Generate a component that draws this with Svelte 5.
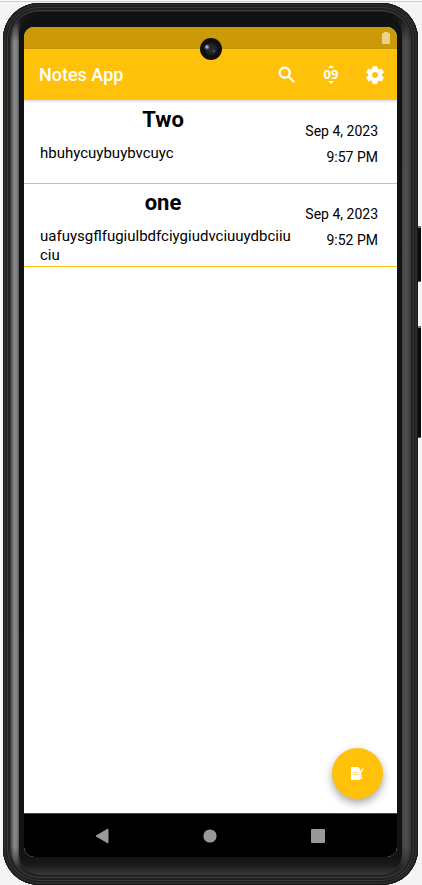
<script>
  const notes = [
    { title: 'Two', body: 'hbuhycuybuybvcuyc', date: 'Sep 4, 2023', time: '9:57 PM' },
    { title: 'one', body: 'uafuysgflfugiulbdfciygiudvciuuydbciiuciu', date: 'Sep 4, 2023', time: '9:52 PM' }
  ];
</script>

<div class="page">
  <div class="phone">
    <span class="key power"></span>
    <span class="key volume"></span>
    <div class="rail">
      <div class="bezel">
        <div class="screen">
          <div class="status">
            <svg width="8" height="13" viewBox="0 0 8 13" aria-hidden="true">
              <path d="M2 0h4v1h1q1 0 1 1v9q0 1-1 1H1q-1 0-1-1V2q0-1 1-1h1z" fill="#e9d28c" />
            </svg>
          </div>
          <span class="camera"></span>
          <header>
            <h1>Notes App</h1>
            <button aria-label="Search">
              <svg width="22" height="22" viewBox="0 0 24 24">
                <path fill="#fff" stroke="#fff" stroke-width=".5" d="M15.5 14h-.79l-.28-.27A6.47 6.47 0 0 0 16 9.5 6.5 6.5 0 1 0 9.5 16c1.61 0 3.09-.59 4.23-1.57l.27.28v.79l5 4.99L20.49 19l-4.99-5zm-6 0C7.01 14 5 11.99 5 9.5S7.01 5 9.5 5 14 7.01 14 9.5 11.99 14 9.5 14z" />
              </svg>
            </button>
            <button class="sort" aria-label="Sort">
              <svg width="6" height="3" viewBox="0 0 6 3"><path d="M0 3 3 0 6 3z" fill="#fff" /></svg>
              <span>09</span>
              <svg width="6" height="3" viewBox="0 0 6 3"><path d="M0 0 3 3 6 0z" fill="#fff" /></svg>
            </button>
            <button aria-label="Settings">
              <svg width="22" height="22" viewBox="0 0 24 24">
                <path fill="#fff" stroke="#fff" stroke-width=".6" d="M19.14 12.94c.04-.3.06-.61.06-.94 0-.32-.02-.64-.07-.94l2.03-1.58c.18-.14.23-.41.12-.61l-1.92-3.32c-.12-.22-.37-.29-.59-.22l-2.39.96c-.5-.38-1.03-.7-1.62-.94l-.36-2.54c-.04-.24-.24-.41-.48-.41h-3.84c-.24 0-.43.17-.47.41l-.36 2.54c-.59.24-1.13.57-1.62.94l-2.39-.96c-.22-.08-.47 0-.59.22L2.74 8.87c-.12.21-.08.47.12.61l2.03 1.58c-.05.3-.09.63-.09.94s.02.64.07.94l-2.03 1.58c-.18.14-.23.41-.12.61l1.92 3.32c.12.22.37.29.59.22l2.39-.96c.5.38 1.03.7 1.62.94l.36 2.54c.05.24.24.41.48.41h3.84c.24 0 .44-.17.47-.41l.36-2.54c.59-.24 1.13-.56 1.62-.94l2.39.96c.22.08.47 0 .59-.22l1.92-3.32c.12-.22.07-.47-.12-.61l-2.01-1.58zM12 15.6c-1.98 0-3.6-1.62-3.6-3.6s1.62-3.6 3.6-3.6 3.6 1.62 3.6 3.6-1.62 3.6-3.6 3.6z" />
              </svg>
            </button>
          </header>
          <main>
            <ul>
              {#each notes as note}
                <li>
                  <div class="text">
                    <h2>{note.title}</h2>
                    <p>{note.body}</p>
                  </div>
                  <div class="when">
                    <span>{note.date}</span>
                    <span>{note.time}</span>
                  </div>
                </li>
              {/each}
            </ul>
            <button class="fab" aria-label="New note">
              <svg width="13" height="13" viewBox="0 0 13 13">
                <path d="M0 0h7l2 2v10q0 1-1 1H0z" fill="#fff" />
                <path d="M2 5.500h6M2 7.500h6" stroke="#ffd866" />
                <path d="M7 10 12 1.500M7 4l1 2 2-2M8 12l2-1V7" fill="none" stroke="#fff" stroke-width="1.400" />
              </svg>
            </button>
          </main>
          <nav>
            <button aria-label="Back">
              <svg width="14" height="16" viewBox="0 0 14 16"><path d="M13 1v14L1 8z" fill="#999" stroke="#999" stroke-linejoin="round" /></svg>
            </button>
            <button aria-label="Home">
              <svg width="14" height="14" viewBox="0 0 14 14"><circle cx="7" cy="7" r="6.600" fill="#999" /></svg>
            </button>
            <button aria-label="Overview">
              <svg width="14" height="14" viewBox="0 0 14 14"><rect width="14" height="14" rx="1" fill="#999" /></svg>
            </button>
          </nav>
        </div>
      </div>
    </div>
  </div>
</div>

<style>
  .page {
    box-sizing: border-box;
    min-height: 100vh;
    padding: 3px 4px 0 3px;
    display: flex;
    background: linear-gradient(#fafafa 1px, #cfcfcf 1px, #cfcfcf 2px, #f4f4f4 2px);
    font-family: Roboto, sans-serif;
    color: #000;
  }
  .phone {
    position: relative;
    flex: 1;
    min-width: 0;
    display: flex;
    padding: 9px 8px;
    border-radius: 36px;
    background: #242525;
    box-shadow:
      inset 0 0 0 1px #181818,
      inset 0 0 0 3px #2a2b2b,
      inset 0 0 0 4px #1a1a1a,
      inset 0 0 0 5px #3a3b3b,
      inset 0 0 0 7px #202020,
      inset 0 0 0 8px #3a3b3b;
  }
  .key {
    position: absolute;
    right: -3px;
    width: 3px;
    background: #0c0c0c;
    border-top: 2px solid #777;
    border-bottom: 1px solid #555;
    box-sizing: border-box;
  }
  .power {
    top: 223px;
    height: 56px;
  }
  .volume {
    top: 323px;
    height: 112px;
  }
  .rail {
    flex: 1;
    min-width: 0;
    display: flex;
    padding: 1px 8px;
    border-radius: 27px;
    background:
      linear-gradient(#0f0f0f, transparent 30px, transparent calc(100% - 30px), #202020),
      linear-gradient(90deg, #4a4a4a, #898989 3px, #808080 6px, #505050 8px, #333 9px, #333 calc(100% - 9px), #414141 calc(100% - 8px), #505050 calc(100% - 4px), #3c3c3c);
  }
  .bezel {
    flex: 1;
    min-width: 0;
    display: flex;
    padding: 14px 5px 18px;
    border-radius: 22px;
    background: linear-gradient(#111213, #131313 calc(100% - 18px), #1a1a1a calc(100% - 10px), #3a3a3a);
  }
  .screen {
    position: relative;
    flex: 1;
    min-width: 0;
    display: flex;
    flex-direction: column;
    border-radius: 10px;
    overflow: hidden;
    background: #fff;
  }
  .status {
    display: flex;
    justify-content: flex-end;
    height: 17px;
    padding: 5px 7px 0;
    background: #cb9a06;
  }
  .camera {
    position: absolute;
    z-index: 2;
    top: 11px;
    left: calc(50% - 11px);
    width: 22px;
    height: 22px;
    border-radius: 50%;
    background:
      radial-gradient(circle at 7px 9px, #fff 0, #8d8aa0 1px, transparent 3px),
      radial-gradient(circle at 14px 13px, #3d5f8c 0, transparent 2px),
      radial-gradient(circle, #2c2c34 0, #202026 5px, #101012 7px);
  }
  button {
    display: flex;
    align-items: center;
    justify-content: center;
    margin: 0;
    padding: 0;
    border: 0;
    background: none;
    font-family: inherit;
    color: #fff;
  }
  header {
    position: relative;
    z-index: 1;
    display: flex;
    align-items: center;
    height: 51px;
    padding-left: 15px;
    background: #ffc10a;
    box-shadow: 0 1px 3px rgba(0, 0, 0, 0.2);
  }
  header button {
    width: 44px;
    height: 44px;
  }
  h1 {
    flex: 1;
    margin: 0;
    font-size: 18px;
    line-height: 24px;
    font-weight: 500;
    color: #fff;
  }
  .sort {
    flex-direction: column;
    gap: 1px;
  }
  .sort span {
    font: 700 13px/11px "Open Sans", sans-serif;
  }
  main {
    position: relative;
    flex: 1;
  }
  ul {
    margin: 0;
    padding: 1px 0 0;
    list-style: none;
  }
  li {
    display: flex;
    box-sizing: border-box;
    min-height: 83px;
    padding: 5px 19px 1px 16px;
    border-bottom: 1px solid #ffc10a;
  }
  .text {
    flex: 1;
    min-width: 0;
  }
  h2 {
    margin: 0 0 10px;
    font-size: 22px;
    line-height: 28px;
    font-weight: 700;
    text-align: center;
  }
  p {
    margin: 0 -8px 0 0;
    font-size: 15px;
    line-height: 19px;
    overflow-wrap: anywhere;
  }
  .when {
    display: flex;
    flex-direction: column;
    gap: 6px;
    width: 92px;
    padding-top: 15px;
    font-size: 14px;
    line-height: 20px;
    text-align: right;
  }
  .fab {
    position: absolute;
    right: 14px;
    bottom: 14px;
    width: 51px;
    height: 51px;
    border-radius: 50%;
    background: #ffc10a;
    box-shadow: 0 4px 8px rgba(0, 0, 0, 0.35);
  }
  nav {
    display: flex;
    align-items: center;
    justify-content: center;
    height: 43px;
    padding-right: 2px;
    border-top: 1px solid #444;
    background: #000;
  }
  nav button {
    width: 108px;
    height: 43px;
  }
</style>
